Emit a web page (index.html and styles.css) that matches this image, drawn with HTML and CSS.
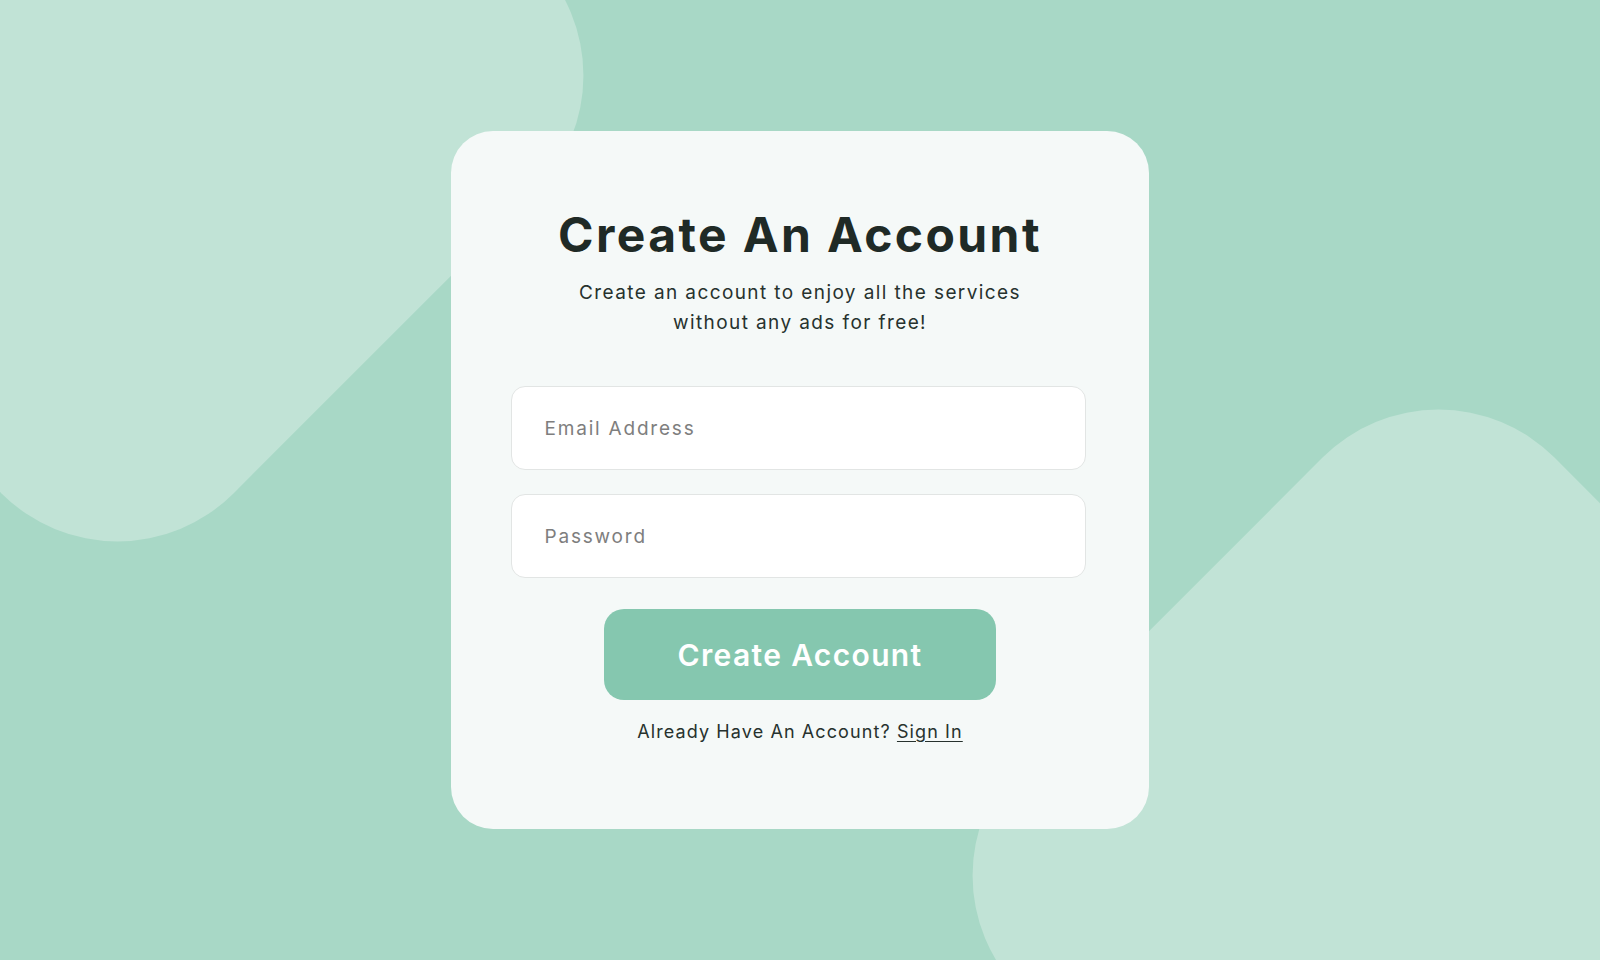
FILE: index.html
```html
<!DOCTYPE html>
<html lang="en">
<head>
<meta charset="utf-8">
<title>Create An Account</title>
<link rel="stylesheet" href="styles.css">
</head>
<body>
<div class="backdrop">
  <div class="blob blob-top"></div>
  <div class="blob blob-bottom"></div>
</div>
<main class="card">
  <h1 class="title">Create An Account</h1>
  <p class="subtitle">Create an account to enjoy all the services<br>without any ads for free!</p>
  <form class="form">
    <input class="field" type="email" placeholder="Email Address">
    <input class="field" type="password" placeholder="Password">
    <button class="submit" type="button">Create Account</button>
  </form>
  <p class="signin">Already Have An Account? <a href="#" class="signin-link">Sign In</a></p>
</main>
</body>
</html>
```

FILE: styles.css
```css
* { box-sizing: border-box; }

html, body {
  margin: 0;
  height: 100%;
  overflow: hidden;
}

body {
  position: relative;
  width: 1600px;
  height: 960px;
  background: #a8d8c6;
  font-family: Inter, "Open Sans", sans-serif;
  display: flex;
  align-items: center;
  justify-content: center;
}

.backdrop {
  position: absolute;
  inset: 0;
  overflow: hidden;
}

.blob {
  position: absolute;
  width: 755px;
  height: 755px;
  background: #c1e3d6;
  border-radius: 164px;
  transform: rotate(45deg);
}

.blob-top {
  left: -260px;
  top: -302px;
}

.blob-bottom {
  left: 1061px;
  top: 498px;
}

.card {
  position: relative;
  z-index: 1;
  width: 698px;
  height: 698px;
  background: #f5f9f8;
  border-radius: 42px;
  padding: 74px 0 0;
  display: flex;
  flex-direction: column;
  align-items: center;
}

.title {
  margin: 0;
  font-size: 48px;
  line-height: 60px;
  font-weight: 700;
  color: #1f2a26;
  letter-spacing: 2.4px;
}

.subtitle {
  margin: 13px 0 0;
  font-size: 19px;
  line-height: 30px;
  color: #27322e;
  text-align: center;
  letter-spacing: 1.4px;
}

.form {
  margin: 48px 4px 0 0;
  width: 575px;
  display: flex;
  flex-direction: column;
  align-items: center;
  gap: 24px;
}

.field {
  width: 100%;
  height: 84px;
  border: 1px solid #e2e5e4;
  border-radius: 14px;
  background: #ffffff;
  padding: 0 33px;
  font-family: inherit;
  font-size: 19px;
  color: #333;
  letter-spacing: 1.8px;
  outline: none;
}

.field::placeholder {
  color: #7e7e7e;
}

.submit {
  margin: 7px 0 0 4px;
  width: 392px;
  height: 91px;
  border: none;
  border-radius: 20px;
  background: #85c7af;
  color: #ffffff;
  font-family: inherit;
  font-size: 30px;
  font-weight: 600;
  letter-spacing: 1.35px;
  cursor: pointer;
}

.signin {
  margin: 20px 0 0;
  font-size: 18px;
  line-height: 24px;
  color: #27322e;
  letter-spacing: 1.1px;
}

.signin-link {
  color: #27322e;
  text-decoration: underline;
  text-underline-offset: 3px;
}
```
